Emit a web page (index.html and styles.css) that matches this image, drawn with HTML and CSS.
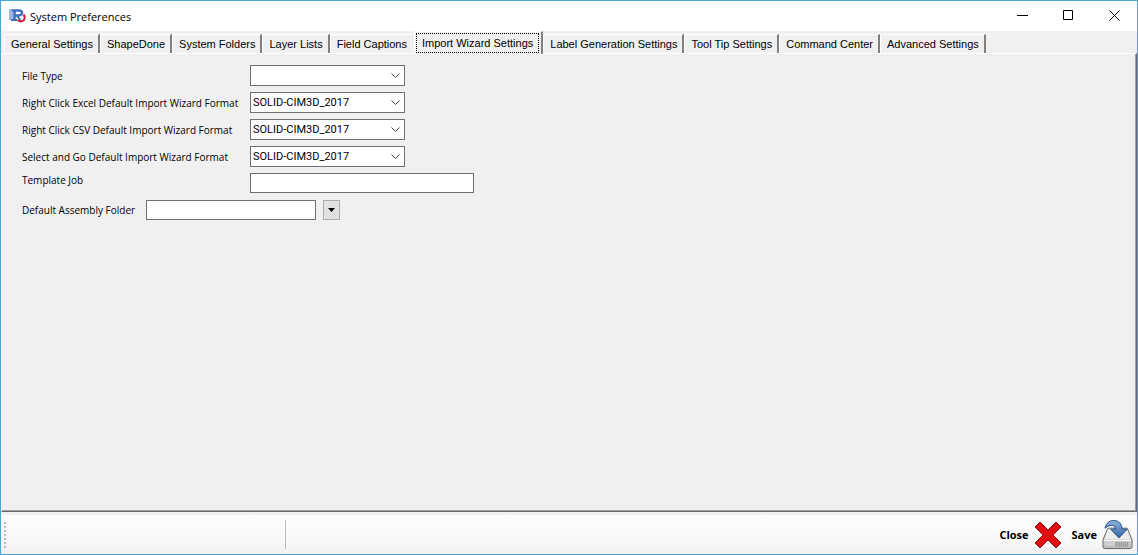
FILE: index.html
```html
<!DOCTYPE html>
<html lang="en">
<head>
  <meta charset="UTF-8">
  <meta name="viewport" content="width=device-width, initial-scale=1.0">
  <title>System Preferences</title>
  <link rel="stylesheet" href="styles.css">
</head>
<body>

  <div class="window">
    <!-- Title bar -->
    <header class="titlebar">
      <svg class="logo" viewBox="0 0 17 16" aria-hidden="true">
        <path d="M0 1h4v11H0z" fill="#9db6de"/>
        <path d="M3 2.500h7q3 0 3 2.200T10 7.500H6M5.500 2v10.500M8 7.500l4 5" fill="none" stroke="#3f6fc0" stroke-width="2.600"/>
        <path d="M2 11h6v2H2z" fill="#3f6fc0"/>
        <path d="M10 9l4-2 1 3-3 2z" fill="#e8eef8"/>
        <path d="M14.500 6.500q2.500 3 0 6-3 2-6-.5" fill="none" stroke="#cf2038" stroke-width="2"/>
      </svg>
      <h1>System Preferences</h1>
      <div class="window-buttons">
        <button type="button" aria-label="Minimize">
          <svg viewBox="0 0 11 11"><path d="M0 5.500h11"/></svg>
        </button>
        <button type="button" aria-label="Maximize">
          <svg viewBox="0 0 11 11"><path d="M.5.500h9v9h-9z"/></svg>
        </button>
        <button type="button" aria-label="Close window">
          <svg viewBox="0 0 11 11"><path d="M.5.500l10 10M10.500.500l-10 10"/></svg>
        </button>
      </div>
    </header>

    <!-- Tabs -->
    <div class="tabs" role="tablist">
      <button type="button" role="tab" class="tab">General Settings</button>
      <button type="button" role="tab" class="tab">ShapeDone</button>
      <button type="button" role="tab" class="tab">System Folders</button>
      <button type="button" role="tab" class="tab">Layer Lists</button>
      <button type="button" role="tab" class="tab before-active">Field Captions</button>
      <button type="button" role="tab" class="tab active" aria-selected="true"><span>Import Wizard Settings</span></button>
      <button type="button" role="tab" class="tab">Label Generation Settings</button>
      <button type="button" role="tab" class="tab">Tool Tip Settings</button>
      <button type="button" role="tab" class="tab">Command Center</button>
      <button type="button" role="tab" class="tab">Advanced Settings</button>
    </div>

    <main class="panel">
      <form class="settings">
        <div class="field">
          <label for="file-type">File Type</label>
          <div class="combo">
            <select id="file-type"><option></option></select>
            <svg viewBox="0 0 9 6"><path d="M.5.500l4 4 4-4"/></svg>
          </div>
        </div>
        <div class="field">
          <label for="excel-format">Right Click Excel Default Import Wizard Format</label>
          <div class="combo">
            <select id="excel-format"><option>SOLID-CIM3D_2017</option></select>
            <svg viewBox="0 0 9 6"><path d="M.5.500l4 4 4-4"/></svg>
          </div>
        </div>
        <div class="field">
          <label for="csv-format">Right Click CSV Default Import Wizard Format</label>
          <div class="combo">
            <select id="csv-format"><option>SOLID-CIM3D_2017</option></select>
            <svg viewBox="0 0 9 6"><path d="M.5.500l4 4 4-4"/></svg>
          </div>
        </div>
        <div class="field">
          <label for="select-format">Select and Go Default Import Wizard Format</label>
          <div class="combo">
            <select id="select-format"><option>SOLID-CIM3D_2017</option></select>
            <svg viewBox="0 0 9 6"><path d="M.5.500l4 4 4-4"/></svg>
          </div>
        </div>
        <div class="field template">
          <label for="template-job">Template Job</label>
          <input type="text" id="template-job">
        </div>
        <div class="field folder">
          <label for="assembly-folder">Default Assembly Folder</label>
          <input type="text" id="assembly-folder">
          <button type="button" class="browse" aria-label="Choose folder">
            <svg viewBox="0 0 7 4"><path d="M0 0h7L3.500 4z"/></svg>
          </button>
        </div>
      </form>
    </main>

    <!-- Bottom toolbar -->
    <footer class="toolbar">
      <div class="grip"></div>
      <div class="separator"></div>
      <button type="button" class="action">
        Close
        <svg class="cross" viewBox="0 0 28 28">
          <path d="M6 1l8 8 8-8 5 5-8 8 8 8-5 5-8-8-8 8-5-5 8-8-8-8z" fill="#e10f0f" stroke="#8c1414"/>
        </svg>
      </button>
      <button type="button" class="action">
        Save
        <svg class="disk" viewBox="0 0 32 32">
          <defs>
            <linearGradient id="case" x1="0" y1="0" x2="0" y2="1">
              <stop offset="0" stop-color="#fafafa"/>
              <stop offset="1" stop-color="#b9b9b9"/>
            </linearGradient>
            <linearGradient id="arrow" x1="0" y1="0" x2="0" y2="1">
              <stop offset="0" stop-color="#8fb2dd"/>
              <stop offset="1" stop-color="#3467a8"/>
            </linearGradient>
          </defs>
          <path d="M6 9h20l5 12v7q0 2-2 2H3q-2 0-2-2v-7z" fill="url(#case)" stroke="#666"/>
          <path d="M7 10L3 20h26l-4-10z" fill="#ececec"/>
          <path d="M2 21.500h28" stroke="#fff"/>
          <path d="M4 24h9v3H4z" fill="#d0d0d0"/>
          <path d="M14.500 23v5M16.500 23v5M18.500 23v5M20.500 23v5M22.500 23v5M24.500 23v5M26.500 23v5" stroke="#8a8a8a"/>
          <path d="M3 9Q5 1 12 1q8 0 9 9h5l-8.500 9L9 10h5q0-4-4-4-4 0-7 3z" fill="url(#arrow)" stroke="#274f86"/>
        </svg>
      </button>
    </footer>
  </div>

</body>
</html>
```
FILE: styles.css
```css
* {
  margin: 0;
  padding: 0;
  box-sizing: border-box;
}
body {
  font-family: Roboto, Arial, sans-serif;
  font-size: 11px;
  color: #000;
}
button, input, select {
  font: inherit;
  color: inherit;
}
.window {
  display: flex;
  flex-direction: column;
  min-height: 100vh;
  border: 1px solid #4aa5d8;
  background-color: #f0f0f0;
}

/* Title bar */
.titlebar {
  display: flex;
  align-items: center;
  height: 30px;
  padding-left: 8px;
  background-color: #fff;
}
.logo {
  width: 17px;
  height: 16px;
  margin-right: 4px;
}
h1 {
  font-family: 'Open Sans', 'Noto Sans', sans-serif;
  font-size: 11px;
  font-weight: normal;
}
.window-buttons {
  display: flex;
  margin-left: auto;
}
.window-buttons button {
  display: grid;
  place-items: center;
  width: 46px;
  height: 30px;
  padding-bottom: 1px;
  border: none;
  background: none;
}
.window-buttons svg {
  width: 11px;
  height: 11px;
  fill: none;
  stroke: #000;
}

/* Tabs */
.tabs {
  display: flex;
  align-items: flex-end;
  height: 22px;
  padding-left: 3px;
}
.tab {
  height: 19px;
  padding: 0 5px 0 6px;
  border: 1px solid #fff;
  border-right: 2px solid #808080;
  border-bottom: none;
  border-radius: 2px 0 0 0;
  background-color: #f0f0f0;
  font-family: 'Liberation Sans', Arial, sans-serif;
  white-space: nowrap;
}
.tab.before-active {
  border-right-color: #f0f0f0;
}
.tab.active {
  height: 23px;
  margin-bottom: -1px;
  padding: 0 2px 0 1px;
  z-index: 1;
}
.tab.active span {
  display: block;
  padding: 2px 5px;
  border: 1px dotted #000;
  line-height: 14px;
}

/* Panel */
.panel {
  flex: 1;
  padding: 11px 20px;
  border: 1px solid #fff;
  border-right-color: #696969;
  border-bottom-color: #696969;
  box-shadow: inset -1px -1px #a0a0a0;
}
.settings {
  display: flex;
  flex-direction: column;
  gap: 6px;
}
.field {
  display: flex;
  align-items: center;
}
.field label {
  width: 228px;
  font-family: 'Open Sans', 'Noto Sans', sans-serif;
  font-size: 10px;
  white-space: nowrap;
}
.combo {
  display: grid;
  grid-template-columns: 1fr 18px;
  align-items: center;
  width: 155px;
}
.combo select {
  grid-area: 1 / 1 / 2 / 3;
  height: 21px;
  padding: 0 2px;
  border: 1px solid #707070;
  border-radius: 0;
  background-color: #fff;
  appearance: none;
}
.combo svg {
  grid-area: 1 / 2;
  width: 9px;
  height: 6px;
  margin-left: 4px;
  fill: none;
  stroke: #404040;
  pointer-events: none;
}
.field input {
  width: 224px;
  height: 20px;
  padding: 0 3px;
  border: 1px solid #707070;
}
.template {
  align-items: flex-start;
}
.folder {
  margin-top: 1px;
}
.folder label {
  width: 124px;
}
.folder input {
  width: 170px;
}
.browse {
  display: flex;
  align-items: center;
  justify-content: center;
  width: 17px;
  height: 20px;
  margin-left: 7px;
  border: 1px solid #adadad;
  background-color: #e1e1e1;
}
.browse svg {
  width: 7px;
  height: 4px;
}

/* Bottom toolbar */
.toolbar {
  display: flex;
  align-items: center;
  height: 39px;
  margin-top: 3px;
  padding: 0 4px 0 3px;
  background-image: linear-gradient(#fdfdfd, #f8f8f8 70%, #f0f0f0);
}
.grip {
  width: 2px;
  height: 26px;
  background-image: repeating-linear-gradient(#b8b8b8 0 2px, transparent 2px 4px);
}
.separator {
  width: 1px;
  height: 29px;
  margin-left: 279px;
  margin-right: auto;
  background-color: #bdbdbd;
}
.action {
  display: flex;
  align-items: center;
  gap: 5px;
  margin-left: 10px;
  border: none;
  background: none;
  font-family: 'Open Sans', 'Noto Sans', sans-serif;
  font-size: 11px;
  font-weight: bold;
}
.cross {
  width: 28px;
  height: 28px;
}
.disk {
  width: 31px;
  height: 32px;
}
```
